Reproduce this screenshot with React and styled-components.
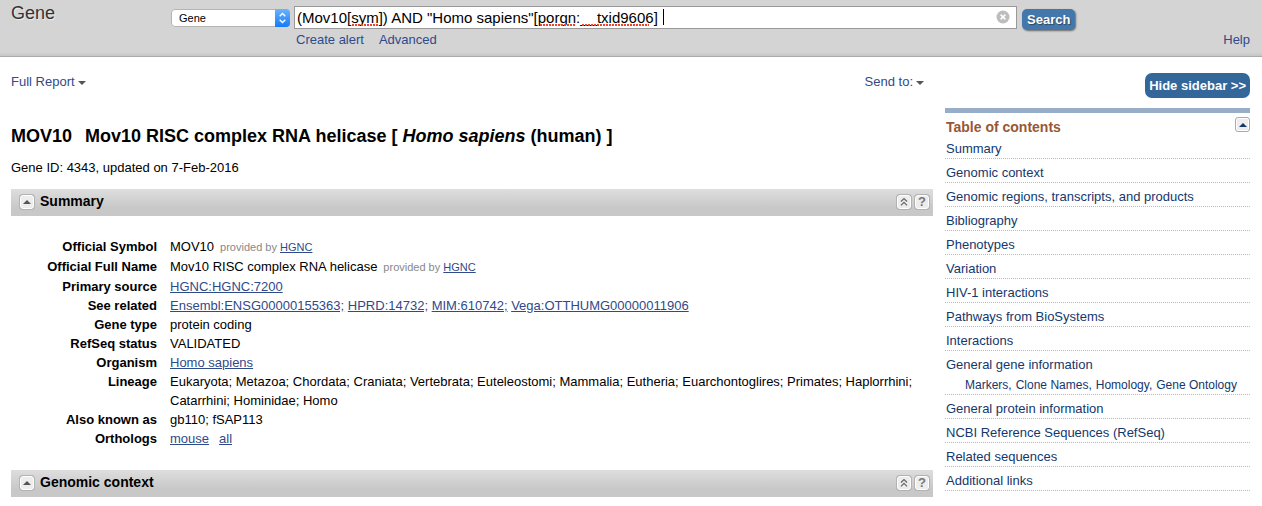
import React from "react";
import styled, { createGlobalStyle } from "styled-components";

const GlobalStyle = createGlobalStyle`
  *, *::before, *::after { box-sizing: border-box; }
  body {
    margin: 0;
    background: #fff;
    color: #000;
    font: 13px/19px "Liberation Sans", Arial, sans-serif;
  }
  button, input, select { font-family: inherit; margin: 0; }
`;

const Header = styled.header`
  display: grid;
  grid-template-columns: 156px 119px minmax(0, 1fr) 229px;
  column-gap: 4px;
  align-items: start;
  height: 57px;
  padding: 0 12px 0 11px;
  background: linear-gradient(#d4d4d4 0, #d4d4d4 52px, #c6c6c6 56px);
  border-bottom: 1px solid #ababab;
`;

const SiteName = styled.h1`
  margin: 2px 0 0;
  font-size: 18px;
  line-height: 22px;
  font-weight: 400;
  color: #333;
  text-shadow: 1px 1px 1px #eee;
`;

const SelectBox = styled.div`
  position: relative;
  margin-top: 9px;
  height: 18px;
  border-radius: 4px;
  overflow: hidden;
`;

const DatabaseSelect = styled.select`
  appearance: none;
  display: block;
  width: 100%;
  height: 18px;
  padding: 0 20px 0 7px;
  border: 1px solid #b4b4b4;
  border-radius: 4px;
  background: #fff;
  color: #000;
  font-size: 11px;
  line-height: 16px;
`;

const SelectArrows = styled.svg`
  position: absolute;
  top: 0;
  right: 0;
  pointer-events: none;
`;

const SearchColumn = styled.div`
  padding-top: 6px;
`;

const SearchField = styled.div`
  position: relative;
`;

const SearchInput = styled.input`
  display: block;
  width: 100%;
  height: 23px;
  padding: 0 26px 0 2px;
  border: 1px solid #999;
  border-radius: 0;
  background: #fff;
  color: #000;
  font-size: 15px;
  outline: none;
`;

const SpellMarks = styled.svg`
  position: absolute;
  top: 0;
  left: 0;
  pointer-events: none;
`;

const ClearButton = styled.button`
  position: absolute;
  top: 4px;
  right: 7px;
  width: 14px;
  height: 14px;
  padding: 0;
  border: 0;
  background: none;
  svg { display: block; }
`;

const SearchLinks = styled.nav`
  display: flex;
  gap: 15px;
  padding: 1px 2px 0;
`;

const PlainLink = styled.a`
  color: #2f4a8b;
  text-decoration: none;
`;

const HeaderEnd = styled.div`
  display: flex;
  flex-direction: column;
  align-items: flex-start;
  padding: 9px 0 0 1px;
  ${PlainLink} {
    align-self: flex-end;
  }
`;

const BlueButton = styled.button`
  height: ${(p) => (p.$raised ? 21 : 25)}px;
  padding: 0 ${(p) => (p.$raised ? 5 : 4)}px;
  border: 0;
  border-radius: ${(p) => (p.$raised ? 5 : 7)}px;
  background: ${(p) => (p.$raised ? "#4478ad" : "#336699")};
  box-shadow: ${(p) => (p.$raised ? "1px 1px 2px #666" : "none")};
  text-shadow: ${(p) => (p.$raised ? "1px 1px 1px #345" : "none")};
  color: #fff;
  font-size: 13px;
  line-height: 19px;
  font-weight: 700;
  white-space: nowrap;
`;

const Page = styled.div`
  display: grid;
  grid-template-columns: minmax(0, 1fr) 305px;
  column-gap: 12px;
  padding: 0 12px 8px 11px;
`;

const Toolbar = styled.div`
  display: flex;
  justify-content: space-between;
  padding: 15px 9px 0 0;
`;

const MenuButton = styled.button`
  display: flex;
  align-items: center;
  gap: 3px;
  padding: 0;
  border: 0;
  background: none;
  color: #2f4a8b;
  font-size: 13px;
  line-height: 19px;
  svg { margin-top: 2px; }
`;

const Title = styled.h2`
  display: flex;
  gap: 13px;
  margin: 34px 0 0;
  font-size: 18px;
  line-height: 22px;
`;

const GeneId = styled.p`
  margin: 11px 0 12px;
`;

const SectionBar = styled.div`
  display: flex;
  align-items: center;
  gap: 4px;
  height: 27px;
  padding: 0 4px 2px 9px;
  background: linear-gradient(#dedede, #c8c8c8 70%);
`;

const SectionTitle = styled.h3`
  flex: 1;
  margin: 0 0 0 2px;
  font-size: 14px;
  line-height: 19px;
`;

const IconButton = styled.button`
  display: flex;
  align-items: center;
  justify-content: center;
  width: ${(p) => (p.$large ? 15 : 14)}px;
  height: ${(p) => (p.$large ? 15 : 14)}px;
  padding: 0;
  border: 1px solid ${(p) => (p.$large ? "#aaa" : "#fff")};
  border-radius: 3px;
  background: #ededed;
  box-shadow: ${(p) => (p.$large ? "inset 0 0 0 1px #fff" : "0 0 0 1px #b2b2b2")};
  color: #777;
  font-size: 13px;
  line-height: 12px;
  font-weight: 700;
`;

const Facts = styled.dl`
  display: grid;
  grid-template-columns: 146px minmax(0, 1fr);
  column-gap: 13px;
  margin: 0;
  padding: 21px 0 22px;
`;

const Term = styled.dt`
  font-weight: 700;
  text-align: right;
  line-height: ${(p) => (p.$tall ? 20 : 19)}px;
`;

const Value = styled.dd`
  margin: 0;
  line-height: ${(p) => (p.$tall ? 20 : 19)}px;
`;

const FactLink = styled.a`
  color: #2f4a8b;
  text-decoration: underline;
`;

const Provider = styled.span`
  margin-left: 6px;
  color: #888;
  font-size: 11px;
`;

const Orthologs = styled.span`
  display: flex;
  gap: 10px;
`;

const Sidebar = styled.aside`
  display: flex;
  flex-direction: column;
  padding-top: 16px;
  > ${BlueButton} { align-self: flex-end; }
`;

const Contents = styled.nav`
  margin-top: 10px;
  border-top: 5px solid #97adc8;
`;

const ContentsHeader = styled.div`
  display: flex;
  align-items: center;
  justify-content: space-between;
  height: 22px;
  padding: 1px 0 0 1px;
  h3 {
    margin: 5px 0 0;
    color: #985735;
    font-size: 14px;
    line-height: 16px;
  }
`;

const ContentsList = styled.ul`
  list-style: none;
  margin: 0;
  padding: 0;
  color: #14376c;
`;

const ContentsItem = styled.li`
  padding: 6px 0 1px 1px;
  border-bottom: 1px dotted #bbb;
  line-height: 16px;
  ${PlainLink} { color: #14376c; }
`;

const SubLinks = styled.div`
  display: flex;
  gap: 4px;
  margin-top: 4px;
  padding-left: 19px;
  font-size: 12px;
`;

const Down = () => (
  <svg width="8" height="4" viewBox="0 0 8 4" aria-hidden="true">
    <path d="M0 0h8L4 4z" fill="#555" />
  </svg>
);

const Up = ({ color = "#555" }) => (
  <svg width="8" height="4" viewBox="0 0 8 4" aria-hidden="true">
    <path d="M0 4h8L4 0z" fill={color} />
  </svg>
);

const Section = ({ title }) => (
  <SectionBar>
    <IconButton aria-label={`Collapse ${title}`}><Up /></IconButton>
    <SectionTitle>{title}</SectionTitle>
    <IconButton aria-label="Go to the top of the page">
      <svg width="8" height="9" viewBox="0 0 8 9" fill="none" stroke="#666" strokeWidth="1.2">
        <path d="M1 4.5 4 1.5 7 4.5M1 8.3 4 5.3 7 8.3" />
      </svg>
    </IconButton>
    <IconButton aria-label="Help">?</IconButton>
  </SectionBar>
);

const Fact = ({ term, tall, children }) => (
  <>
    <Term $tall={tall}>{term}</Term>
    <Value $tall={tall}>{children}</Value>
  </>
);

const Hgnc = () => (
  <Provider>provided by <FactLink href="#hgnc">HGNC</FactLink></Provider>
);

const related = ["Ensembl:ENSG00000155363;", "HPRD:14732;", "MIM:610742;", "Vega:OTTHUMG00000011906"];

const contents = [
  "Summary",
  "Genomic context",
  "Genomic regions, transcripts, and products",
  "Bibliography",
  "Phenotypes",
  "Variation",
  "HIV-1 interactions",
  "Pathways from BioSystems",
  "Interactions",
  "General gene information",
  "General protein information",
  "NCBI Reference Sequences (RefSeq)",
  "Related sequences",
  "Additional links",
];

const subContents = ["Markers", "Clone Names", "Homology", "Gene Ontology"];

export default function App() {
  return (
    <>
      <GlobalStyle />
      <Header>
        <SiteName>Gene</SiteName>
        <SelectBox>
          <DatabaseSelect aria-label="Database" defaultValue="Gene">
            <option>Gene</option>
          </DatabaseSelect>
          <SelectArrows width="15" height="18" viewBox="0 0 15 18">
            <defs>
              <linearGradient id="arrows" x2="0" y2="1">
                <stop stopColor="#6cb3fa" />
                <stop offset="1" stopColor="#147bfb" />
              </linearGradient>
            </defs>
            <path d="M0 0h15v18H0z" fill="url(#arrows)" />
            <path d="M4.7 7.3 7.5 4.5l2.8 2.8M4.7 10.7l2.8 2.8 2.8-2.8" fill="none" stroke="#fff" strokeWidth="1.4" />
          </SelectArrows>
        </SelectBox>
        <SearchColumn>
          <SearchField>
            <SearchInput
              aria-label="Search term"
              defaultValue={'(Mov10[sym]) AND "Homo sapiens"[porgn:__txid9606] '}
              spellCheck={false}
            />
            <SpellMarks width="380" height="23" viewBox="0 0 380 23" fill="none">
              <path d="M58 19h27M246 19h35M288 19h67" stroke="#f0432c" strokeWidth="2" strokeDasharray="2 1" />
              <path d="M369.5 3v16" stroke="#000" />
            </SpellMarks>
            <ClearButton aria-label="Clear search">
              <svg width="14" height="14" viewBox="0 0 14 14">
                <circle cx="7" cy="7" r="6.5" fill="#bdbdbd" />
                <path d="m4.6 4.6 4.8 4.8m0-4.8L4.6 9.4" stroke="#fff" strokeWidth="1.5" />
              </svg>
            </ClearButton>
          </SearchField>
          <SearchLinks>
            <PlainLink href="#alert">Create alert</PlainLink>
            <PlainLink href="#advanced">Advanced</PlainLink>
          </SearchLinks>
        </SearchColumn>
        <HeaderEnd>
          <BlueButton $raised>Search</BlueButton>
          <PlainLink href="#help">Help</PlainLink>
        </HeaderEnd>
      </Header>
      <Page>
        <main>
          <Toolbar>
            <MenuButton>Full Report <Down /></MenuButton>
            <MenuButton>Send to: <Down /></MenuButton>
          </Toolbar>
          <Title>
            <span>MOV10</span>
            <span>Mov10 RISC complex RNA helicase [ <em>Homo sapiens</em> (human) ]</span>
          </Title>
          <GeneId>Gene ID: 4343, updated on 7-Feb-2016</GeneId>
          <Section title="Summary" />
          <Facts>
            <Fact term="Official Symbol" tall>MOV10<Hgnc /></Fact>
            <Fact term="Official Full Name" tall>Mov10 RISC complex RNA helicase<Hgnc /></Fact>
            <Fact term="Primary source"><FactLink href="#source">HGNC:HGNC:7200</FactLink></Fact>
            <Fact term="See related">
              {related.map((name) => (
                <React.Fragment key={name}><FactLink href="#related">{name}</FactLink>{" "}</React.Fragment>
              ))}
            </Fact>
            <Fact term="Gene type">protein coding</Fact>
            <Fact term="RefSeq status">VALIDATED</Fact>
            <Fact term="Organism"><FactLink href="#organism">Homo sapiens</FactLink></Fact>
            <Fact term="Lineage">
              Eukaryota; Metazoa; Chordata; Craniata; Vertebrata; Euteleostomi; Mammalia; Eutheria; Euarchontoglires; Primates; Haplorrhini; Catarrhini; Hominidae; Homo
            </Fact>
            <Fact term="Also known as">gb110; fSAP113</Fact>
            <Fact term="Orthologs">
              <Orthologs>
                <FactLink href="#mouse">mouse</FactLink>
                <FactLink href="#all">all</FactLink>
              </Orthologs>
            </Fact>
          </Facts>
          <Section title="Genomic context" />
        </main>
        <Sidebar>
          <BlueButton>Hide sidebar &gt;&gt;</BlueButton>
          <Contents aria-label="Table of contents">
            <ContentsHeader>
              <h3>Table of contents</h3>
              <IconButton $large aria-label="Collapse contents"><Up color="#14376c" /></IconButton>
            </ContentsHeader>
            <ContentsList>
              {contents.map((name) => (
                <ContentsItem key={name}>
                  <PlainLink href="#section">{name}</PlainLink>
                  {name === "General gene information" && (
                    <SubLinks>
                      {subContents.map((sub, i) => (
                        <span key={sub}>
                          <PlainLink href="#sub">{sub}</PlainLink>
                          {i < subContents.length - 1 && ","}
                        </span>
                      ))}
                    </SubLinks>
                  )}
                </ContentsItem>
              ))}
            </ContentsList>
          </Contents>
        </Sidebar>
      </Page>
    </>
  );
}
